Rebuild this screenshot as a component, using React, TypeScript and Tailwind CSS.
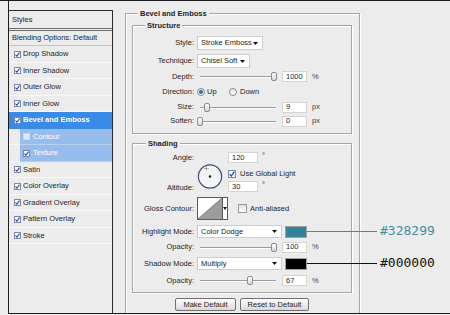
import React from "react";

type RowDef = { label: string; h: string; kind?: "sel" | "sub"; checked?: boolean };

const rows: RowDef[] = [
  { label: "Drop Shadow", h: "h-[17px]" },
  { label: "Inner Shadow", h: "h-[16px]" },
  { label: "Outer Glow", h: "h-[17px]" },
  { label: "Inner Glow", h: "h-[16px]" },
  { label: "Bevel and Emboss", h: "h-[17px]", kind: "sel" },
  { label: "Contour", h: "h-[16px]", kind: "sub", checked: false },
  { label: "Texture", h: "h-[17px]", kind: "sub" },
  { label: "Satin", h: "h-[16px]" },
  { label: "Color Overlay", h: "h-[17px]" },
  { label: "Gradient Overlay", h: "h-[16px]" },
  { label: "Pattern Overlay", h: "h-[17px]" },
  { label: "Stroke", h: "h-[16px]" },
];

function Check({ checked = true, faint = false }: { checked?: boolean; faint?: boolean }) {
  return (
    <span
      className={`flex h-[7px] w-[7px] shrink-0 items-center justify-center border ${
        faint ? "border-[#c4d8f3] bg-[#dfeafa]" : "border-[#7d8aa6] bg-white"
      }`}
    >
      {checked && (
        <svg width="5" height="5" viewBox="0 0 5 5">
          <path d="M0.5 2.6 L1.9 4.2 L4.5 0.6" fill="none" stroke="#2a46a6" strokeWidth="1.1" />
        </svg>
      )}
    </span>
  );
}

function ListRow({ r }: { r: RowDef }) {
  if (r.kind === "sel") {
    return (
      <div className={`${r.h} flex items-center border-b border-[#3a8ae8] bg-[#3a8ae8] pl-[5px] font-bold text-white`}>
        <Check />
        <span className="ml-[2px]">{r.label}</span>
      </div>
    );
  }
  if (r.kind === "sub") {
    return (
      <div className={`${r.h} flex`}>
        <div className="w-[11px] shrink-0 border-b border-[#f7f7f7]" />
        <div className="flex flex-1 items-center border-b border-[#b4d0f3] bg-[#97bdee] pl-[3px] text-white">
          <Check checked={r.checked !== false} faint={r.checked === false} />
          <span className="ml-[3px]">{r.label}</span>
        </div>
      </div>
    );
  }
  return (
    <div className={`${r.h} flex items-center border-b border-[#f8f8f8] pl-[5px]`}>
      <Check />
      <span className="ml-[2px]">{r.label}</span>
    </div>
  );
}

function Arrow() {
  return (
    <svg width="5" height="3" viewBox="0 0 5 3" className="shrink-0">
      <polygon points="0,0 5,0 2.5,3" fill="#111" />
    </svg>
  );
}

function Select({ w, h, text }: { w: string; h: string; text: string }) {
  return (
    <div className={`${w} ${h} flex items-center justify-between border border-[#cdcdcd] bg-white pl-[3px] pr-[4px]`}>
      <span>{text}</span>
      <Arrow />
    </div>
  );
}

function Field({ w, value }: { w: string; value: string }) {
  return (
    <div className={`${w} flex h-[11px] items-center border border-[#d4d4d4] bg-white pl-[3px]`}>{value}</div>
  );
}

function Slider({ pos }: { pos: number }) {
  return (
    <div className="relative h-[11px] w-[79px] shrink-0">
      <div className="absolute left-[3px] right-0 top-[5px] h-px bg-[#9a9a9a]" />
      <div className="absolute left-[3px] right-0 top-[6px] h-px bg-white" />
      <div
        className="absolute top-px h-[9px] w-[6px] rounded-[2px] border border-[#8c8c8c] bg-linear-to-b from-white to-[#d6d6d6]"
        style={{ left: pos }}
      />
    </div>
  );
}

function Row({ label, h, children, className = "" }: { label: string; h: string; children?: React.ReactNode; className?: string }) {
  return (
    <div className={`flex items-center ${h} ${className}`}>
      <div className="w-[61px] shrink-0 text-right">{label}</div>
      <div className="ml-[3px] flex items-center">{children}</div>
    </div>
  );
}

function Radio({ on }: { on: boolean }) {
  return (
    <span className="flex h-[8px] w-[8px] shrink-0 items-center justify-center rounded-full border border-[#8a8a8a] bg-linear-to-b from-[#e2e2e2] to-white">
      {on && <span className="h-[4px] w-[4px] rounded-full bg-[#1f6fb8]" />}
    </span>
  );
}

const fieldset = "border border-[#a6a6a6] shadow-[inset_1px_1px_0_#fff,1px_1px_0_#fff]";

export default function App() {
  return (
    <div className="h-[315px] w-[450px] overflow-hidden border-t border-[#1c1c1c] bg-[#ececec] text-[7.5px] leading-none text-[#1e1e1e] [font-family:'Liberation_Sans',Arial,sans-serif]">
      <div className="ml-[8px] flex h-[313px] border-b border-l border-[#1c1c1c]">
        {/* Styles list */}
        <div className="mt-[9px] flex w-[104px] shrink-0 flex-col border-r border-t border-[#2a2a2a]">
          <div className="flex h-[20px] items-center border-b-[3px] border-double border-[#6e6e6e] pl-[3px]">Styles</div>
          <div className="flex h-[15px] items-center border-b border-[#c4c4c4] pl-[3px]">Blending Options: Default</div>
          {rows.map((r) => (
            <ListRow key={r.label} r={r} />
          ))}
          <div className="flex-1" />
        </div>

        {/* Settings */}
        <div className="relative flex-1 overflow-hidden">
          <fieldset className={`ml-[12px] mt-[6px] h-[330px] w-[235px] pl-[6px] pr-[7px] ${fieldset}`}>
            <legend className="ml-[6px] h-[13px] bg-[#ececec] px-[2px] font-bold leading-[13px]">Bevel and Emboss</legend>

            <fieldset className={`w-[220px] pb-[5px] ${fieldset}`}>
              <legend className="ml-[12px] h-[11px] bg-[#ececec] px-[2px] font-bold leading-[11px]">Structure</legend>
              <div className="pt-[4px]">
                <Row label="Style:" h="h-[16px]">
                  <Select w="w-[66px]" h="h-[14px]" text="Stroke Emboss" />
                </Row>
                <Row label="Technique:" h="h-[16px]" className="mt-[2px]">
                  <Select w="w-[53px]" h="h-[14px]" text="Chisel Soft" />
                </Row>
                <Row label="Depth:" h="h-[15px]">
                  <Slider pos={74} />
                  <div className="ml-[6px]"><Field w="w-[25px]" value="1000" /></div>
                  <span className="ml-[5px] text-[#444]">%</span>
                </Row>
                <Row label="Direction:" h="h-[16px]">
                  <div className="flex w-[32px] items-center">
                    <Radio on />
                    <span className="ml-[2px]">Up</span>
                  </div>
                  <Radio on={false} />
                  <span className="ml-[3px]">Down</span>
                </Row>
                <Row label="Size:" h="h-[14px]">
                  <Slider pos={7} />
                  <div className="ml-[6px]"><Field w="w-[25px]" value="9" /></div>
                  <span className="ml-[5px] text-[#444]">px</span>
                </Row>
                <Row label="Soften:" h="h-[14px]">
                  <Slider pos={0} />
                  <div className="ml-[6px]"><Field w="w-[25px]" value="0" /></div>
                  <span className="ml-[5px] text-[#444]">px</span>
                </Row>
              </div>
            </fieldset>

            <fieldset className={`mt-[4px] w-[220px] pb-[3px] ${fieldset}`}>
              <legend className="ml-[13px] h-[11px] bg-[#ececec] px-[2px] font-bold leading-[11px]">Shading</legend>
              <div className="flex items-start pt-[3px]">
                <div className="flex h-[41px] w-[61px] shrink-0 flex-col justify-between text-right">
                  <div className="flex h-[11px] items-center justify-end">Angle:</div>
                  <div className="flex h-[11px] items-center justify-end">Altitude:</div>
                </div>
                <svg width="26" height="25" viewBox="0 0 26 25" className="ml-[3px] mt-[12px] shrink-0">
                  <circle cx="13" cy="12.5" r="11.6" fill="#f4f4f4" stroke="#3a4a72" strokeWidth="1.2" />
                  <circle cx="13" cy="12.5" r="1.2" fill="#111" />
                  <path d="M9.5 2.5 v4 M7.5 4.5 h4" stroke="#444" strokeWidth="0.8" strokeDasharray="1 0.8" />
                </svg>
                <div className="ml-[5px] flex flex-col">
                  <div className="flex h-[11px] items-center">
                    <Field w="w-[30px]" value="120" />
                    <span className="ml-[4px] self-start">°</span>
                  </div>
                  <div className="mt-[6px] flex h-[10px] items-center">
                    <span className="flex h-[8px] w-[8px] items-center justify-center border border-[#7d8aa6] bg-white">
                      <svg width="6" height="6" viewBox="0 0 5 5">
                        <path d="M0.5 2.6 L1.9 4.2 L4.5 0.6" fill="none" stroke="#2a46a6" strokeWidth="1.1" />
                      </svg>
                    </span>
                    <span className="ml-[4px] whitespace-nowrap">Use Global Light</span>
                  </div>
                  <div className="mt-[2px] flex h-[11px] items-center">
                    <Field w="w-[30px]" value="30" />
                    <span className="ml-[4px] self-start">°</span>
                  </div>
                </div>
              </div>

              <Row label="Gloss Contour:" h="h-[23px]" className="mt-[4px]">
                <div className="flex h-[23px] w-[31px] border border-[#5a5a5a] bg-white">
                  <svg width="24" height="21" viewBox="0 0 24 21" className="shrink-0">
                    <polygon points="0,21 24,0 24,21" fill="#9c9c9c" />
                    <line x1="0" y1="21" x2="24" y2="0" stroke="#6a6a6a" strokeWidth="0.8" />
                  </svg>
                  <div className="flex flex-1 items-center justify-center border-l border-[#5a5a5a]">
                    <svg width="4" height="3" viewBox="0 0 4 3"><polygon points="0,0 4,0 2,3" fill="#111" /></svg>
                  </div>
                </div>
                <span className="ml-[10px] h-[9px] w-[9px] border border-[#9a9a9a] bg-linear-to-b from-[#dedede] to-white" />
                <span className="ml-[3px]">Anti-aliased</span>
              </Row>

              <Row label="Highlight Mode:" h="h-[15px]" className="mt-[4px]">
                <Select w="w-[85px]" h="h-[13px]" text="Color Dodge" />
                <span className="ml-[3px] h-[12px] w-[22px] border border-[#a0a0a0] bg-[#328299]" />
              </Row>
              <Row label="Opacity:" h="h-[16px]">
                <Slider pos={74} />
                <div className="ml-[6px]"><Field w="w-[25px]" value="100" /></div>
                <span className="ml-[5px] text-[#444]">%</span>
              </Row>
              <Row label="Shadow Mode:" h="h-[17px]">
                <Select w="w-[85px]" h="h-[13px]" text="Multiply" />
                <span className="ml-[3px] h-[12px] w-[22px] border border-[#a0a0a0] bg-black" />
              </Row>
              <Row label="Opacity:" h="h-[17px]">
                <Slider pos={50} />
                <div className="ml-[6px]"><Field w="w-[25px]" value="67" /></div>
                <span className="ml-[5px] text-[#444]">%</span>
              </Row>
            </fieldset>

            <div className="mt-[5px] flex w-[220px] justify-center gap-[4px]">
              <div className="flex h-[13px] w-[61px] items-center justify-center rounded-[2px] border border-[#707070] bg-linear-to-b from-white to-[#d9d9d9]">Make Default</div>
              <div className="flex h-[13px] w-[69px] items-center justify-center rounded-[2px] border border-[#707070] bg-linear-to-b from-white to-[#d9d9d9]">Reset to Default</div>
            </div>
          </fieldset>

          {/* annotations */}
          <div className="absolute left-[194px] top-[230px] h-px w-[70px] bg-[#3d8ca3]" />
          <div className="absolute left-[267px] top-[223px] h-[14px] text-[13px] leading-[14px] text-[#3f8ea5] [font-family:'DejaVu_Sans_Mono',monospace]">#328299</div>
          <div className="absolute left-[194px] top-[262px] h-px w-[70px] bg-[#111]" />
          <div className="absolute left-[267px] top-[255px] h-[14px] text-[13px] leading-[14px] text-[#111] [font-family:'DejaVu_Sans_Mono',monospace]">#000000</div>
        </div>
      </div>
    </div>
  );
}
